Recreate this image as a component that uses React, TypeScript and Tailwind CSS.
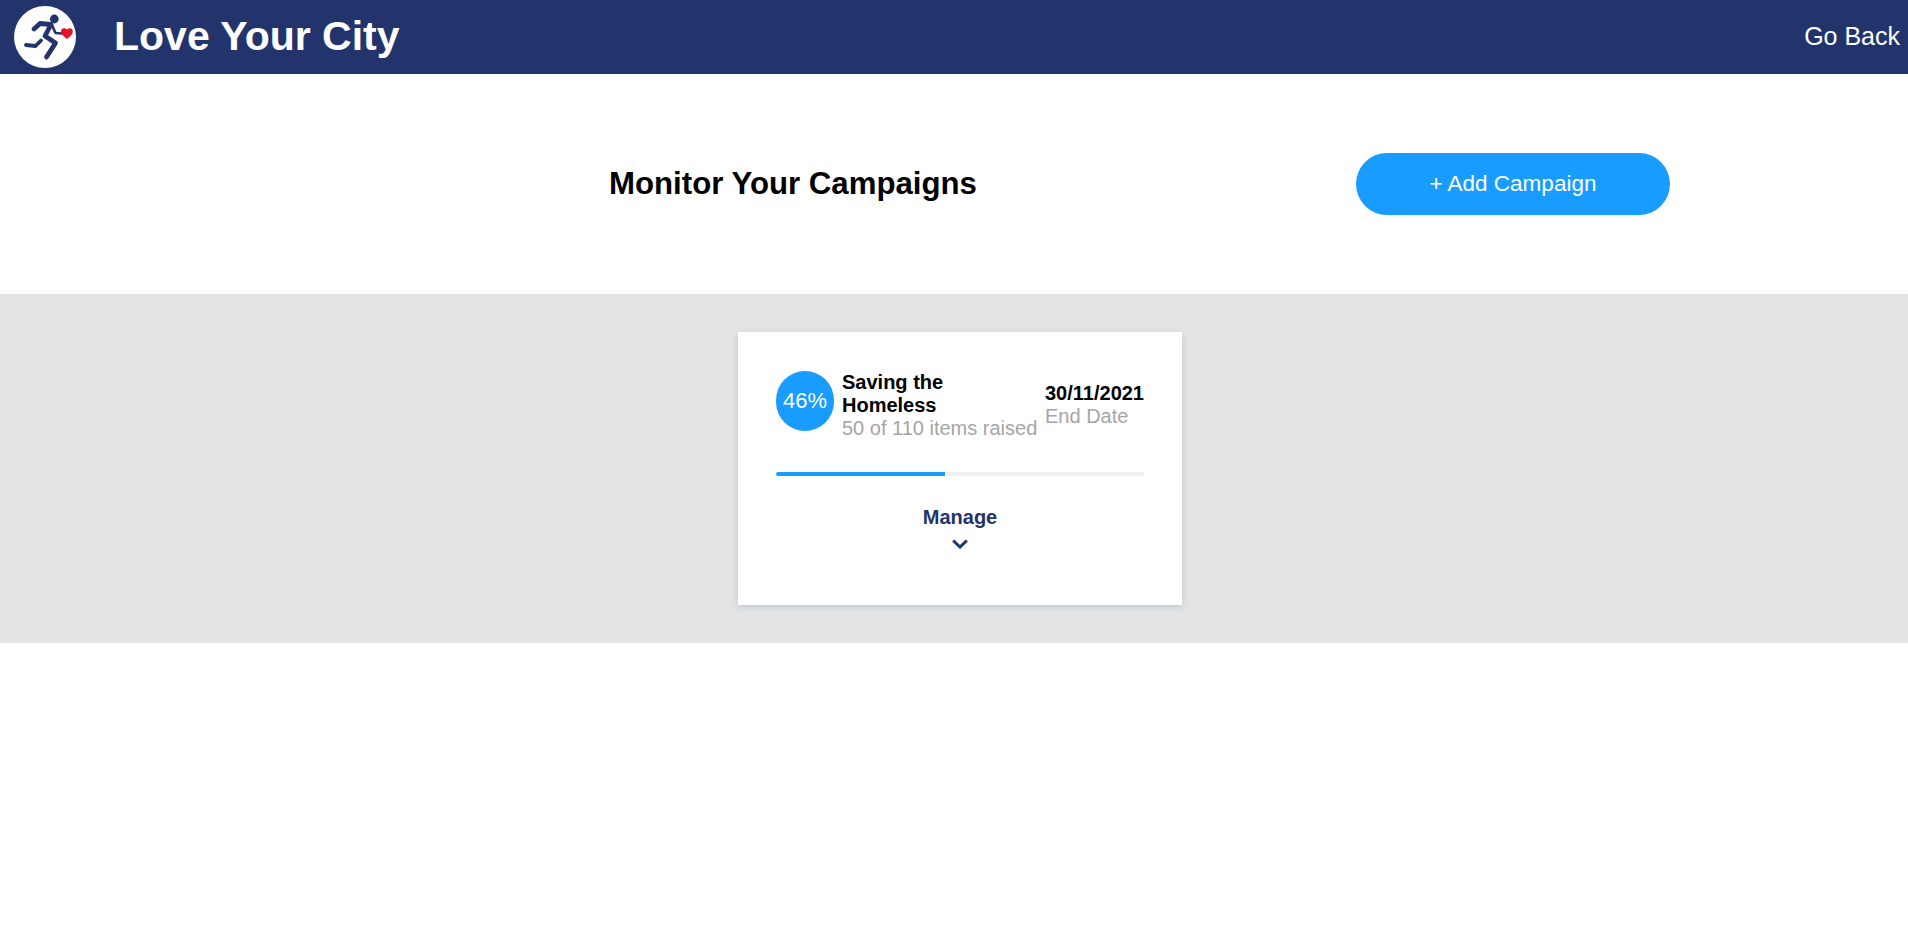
export default function App() {
  return (
    <div className="min-h-[936px] bg-white font-['Liberation_Sans',Arial,sans-serif]">
      <header className="flex h-[74px] items-center justify-between bg-[#22346b] pl-[14px] pr-[8px]">
        <div className="flex items-center gap-[38px]">
          <svg width="62" height="62" viewBox="0 0 62 62" className="shrink-0">
            <circle cx="31" cy="31" r="31" fill="#fff" />
            <circle cx="40.3" cy="13" r="4.4" fill="#22346b" />
            <path d="M20 23 L26 17.5 L37 18.5 L31 30 L41.5 37 L32.5 51" fill="none" stroke="#22346b" strokeWidth="4.8" strokeLinecap="round" strokeLinejoin="round" />
            <path d="M38 19 L41.5 27 L48 27.5" fill="none" stroke="#22346b" strokeWidth="2.6" strokeLinecap="round" strokeLinejoin="round" />
            <path d="M27 34.5 L21.5 40 L12 39" fill="none" stroke="#22346b" strokeWidth="3.8" strokeLinecap="round" strokeLinejoin="round" />
            <path d="M53 33 C49.5 30 46.8 28 47 25 C47.2 22 51 21.4 53 23.6 C55 21.6 58.6 22 58.8 25 C59 28 56.5 30.5 53 33 Z" fill="#e8112d" />
          </svg>
          <h1 className="pb-[1px] text-[41px] leading-none font-bold text-white">Love Your City</h1>
        </div>
        <button className="pb-[1px] text-[25px] leading-none text-white">Go Back</button>
      </header>
      <section className="flex h-[220px] items-center">
        <h2 className="ml-[609px] pb-[1px] text-[31.2px] leading-none font-bold text-black">Monitor Your Campaigns</h2>
        <button className="ml-[379px] -mt-[1px] h-[62px] w-[314px] rounded-[31px] bg-[#199cff] text-[22.5px] text-white">+ Add Campaign</button>
      </section>
      <section className="flex h-[349px] justify-center bg-[#e4e4e4] pt-[38px] pl-[12px]">
        <div className="h-[273px] w-[444px] bg-white px-[38px] pt-[39px] shadow-[0_2px_6px_rgba(120,150,180,0.35)]">
          <div className="flex items-start">
            <div className="flex h-[60px] w-[58px] shrink-0 items-center justify-center rounded-full bg-[#199cff] pb-[1px] text-[22px] text-white">46%</div>
            <div className="ml-[8px] w-[203px] shrink-0">
              <div className="text-[20px] leading-[23px] font-bold text-black">Saving the<br />Homeless</div>
              <div className="text-[20px] leading-[23px] text-[#a5a5a5]">50 of 110 items raised</div>
            </div>
            <div className="mt-[11px]">
              <div className="text-[20px] leading-[23px] font-bold text-black">30/11/2021</div>
              <div className="text-[20px] leading-[23px] text-[#a5a5a5]">End Date</div>
            </div>
          </div>
          <div className="mt-[32px] h-[4px] w-[368px] rounded-sm bg-[#f0f0f0]">
            <div className="h-full rounded-l-sm bg-[#199cff]" style={{ width: "46%" }} />
          </div>
          <div className="mt-[30px] flex flex-col items-center">
            <div className="text-[20px] leading-[23px] font-bold text-[#22346b]">Manage</div>
            <svg width="16" height="10" viewBox="0 0 16 10" className="mt-[10px]">
              <path d="M1.2 1.5 L8 8 L14.8 1.5" fill="none" stroke="#22346b" strokeWidth="3" />
            </svg>
          </div>
        </div>
      </section>
    </div>
  );
}
